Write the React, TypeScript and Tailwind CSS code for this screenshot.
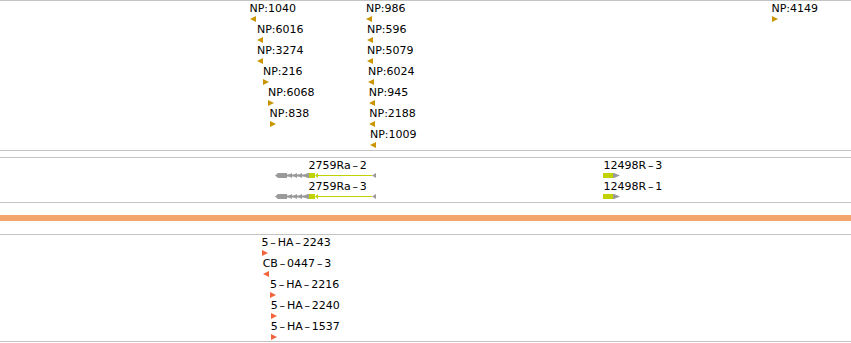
import React from 'react';

type Dir = 'L' | 'R';

interface Feat {
  label: string;
  x: number;
  row: number;
  dir: Dir;
}

const npFeatures: Feat[] = [
  { label: 'NP:1040', x: 249.5, row: 0, dir: 'L' },
  { label: 'NP:6016', x: 257, row: 1, dir: 'L' },
  { label: 'NP:3274', x: 257, row: 2, dir: 'L' },
  { label: 'NP:216', x: 263, row: 3, dir: 'R' },
  { label: 'NP:6068', x: 268, row: 4, dir: 'R' },
  { label: 'NP:838', x: 269.6, row: 5, dir: 'R' },
  { label: 'NP:986', x: 366, row: 0, dir: 'L' },
  { label: 'NP:596', x: 367, row: 1, dir: 'L' },
  { label: 'NP:5079', x: 367, row: 2, dir: 'L' },
  { label: 'NP:6024', x: 368, row: 3, dir: 'L' },
  { label: 'NP:945', x: 368.7, row: 4, dir: 'L' },
  { label: 'NP:2188', x: 369.3, row: 5, dir: 'L' },
  { label: 'NP:1009', x: 370, row: 6, dir: 'L' },
  { label: 'NP:4149', x: 771.5, row: 0, dir: 'R' },
];

const haFeatures: Feat[] = [
  { label: '5-HA-2243', x: 261.5, row: 0, dir: 'R' },
  { label: 'CB-0447-3', x: 262.7, row: 1, dir: 'L' },
  { label: '5-HA-2216', x: 270, row: 2, dir: 'R' },
  { label: '5-HA-2240', x: 270.7, row: 3, dir: 'R' },
  { label: '5-HA-1537', x: 270.7, row: 4, dir: 'R' },
];

// the track labels draw their dashes in a wide cell
const Label: React.FC<{ text: string }> = ({ text }) => {
  const parts = text.split('-');
  return (
    <>
      {parts.map((p, i) => (
        <React.Fragment key={i}>
          {i > 0 && <span className="inline-block w-[9.2px] text-center">–</span>}
          {p}
        </React.Fragment>
      ))}
    </>
  );
};

const Arrow: React.FC<{ dir: Dir; color: string }> = ({ dir, color }) => (
  <svg width="6" height="6" viewBox="0 0 6 6" className="mt-px block">
    <polygon points={dir === 'L' ? '0,3 6,0 6,6' : '0,0 6,3 0,6'} fill={color} />
  </svg>
);

const Feature: React.FC<{ f: Feat; top: number; color: string }> = ({ f, top, color }) => (
  <div
    className="absolute flex flex-col items-start"
    style={{ left: f.x, top: top + f.row * 21 }}
  >
    <span className="text-[11px] leading-[13px] whitespace-nowrap text-black">
      <Label text={f.label} />
    </span>
    <Arrow dir={f.dir} color={color} />
  </div>
);

const GRAY = '#9a9a9a';
const LIME = '#c0d300';

// minus-strand transcript drawn from x=274
const TranscriptMinus: React.FC = () => (
  <svg width="104" height="5" viewBox="0 0 104 5" className="block">
    <rect x="13" y="1.5" width="22" height="2" fill={GRAY} />
    <polygon points="1,2.5 4,0 13,0 13,5 4,5" fill={GRAY} />
    <polygon points="13,2.5 18,0 18,5" fill={GRAY} />
    <polygon points="18,2.5 23,0 23,5" fill={GRAY} />
    <polygon points="23,2.5 28,0 28,5" fill={GRAY} />
    <polygon points="28,2.5 34,0 35,0 35,5 34,5" fill={GRAY} />
    <rect x="35" y="0" width="6" height="5" fill={LIME} />
    <polygon points="41,2.5 44,0 44,5" fill={LIME} />
    <rect x="44" y="2" width="54" height="1" fill={LIME} />
    <polygon points="98,2.5 102,0 102,5" fill={GRAY} />
  </svg>
);

const TranscriptPlus: React.FC = () => (
  <svg width="18" height="5" viewBox="0 0 18 5" className="block">
    <rect x="0" y="0" width="10" height="5" fill={LIME} />
    <polygon points="10,0 11,0 17,2.5 11,5 10,5" fill={GRAY} />
  </svg>
);

const Gene: React.FC<{ label: string; labelX: number; glyphX: number; top: number; plus?: boolean }> = ({
  label,
  labelX,
  glyphX,
  top,
  plus,
}) => (
  <>
    <span
      className="absolute text-[11px] leading-[13px] whitespace-nowrap text-black"
      style={{ left: labelX, top }}
    >
      <Label text={label} />
    </span>
    <div className="absolute" style={{ left: glyphX, top: top + 14 }}>
      {plus ? <TranscriptPlus /> : <TranscriptMinus />}
    </div>
  </>
);

export default function App() {
  return (
    <div className="w-[851px] h-[343px] bg-white overflow-hidden font-['DejaVu_Sans',sans-serif] flex flex-col">
      {/* NP track */}
      <div className="relative h-[151px] border-y border-[#c4c4c4]">
        {npFeatures.map((f) => (
          <Feature key={f.label} f={f} top={1} color="#c99500" />
        ))}
      </div>
      <div className="h-[6px]" />

      {/* gene track */}
      <div className="relative h-[46px] border-y border-[#c4c4c4]">
        <Gene label="2759Ra-2" labelX={308.5} glyphX={274} top={1} />
        <Gene label="2759Ra-3" labelX={308.5} glyphX={274} top={22} />
        <Gene label="12498R-3" labelX={603.5} glyphX={603} top={1} plus />
        <Gene label="12498R-1" labelX={603.5} glyphX={603} top={22} plus />
      </div>

      <div className="h-[12px]" />
      <div className="h-[6px] bg-[#f4a46d]" />
      <div className="h-[13px]" />

      {/* HA track */}
      <div className="relative h-[108px] border-y border-[#c4c4c4]">
        {haFeatures.map((f) => (
          <Feature key={f.label} f={f} top={1} color="#f2643c" />
        ))}
      </div>
    </div>
  );
}
